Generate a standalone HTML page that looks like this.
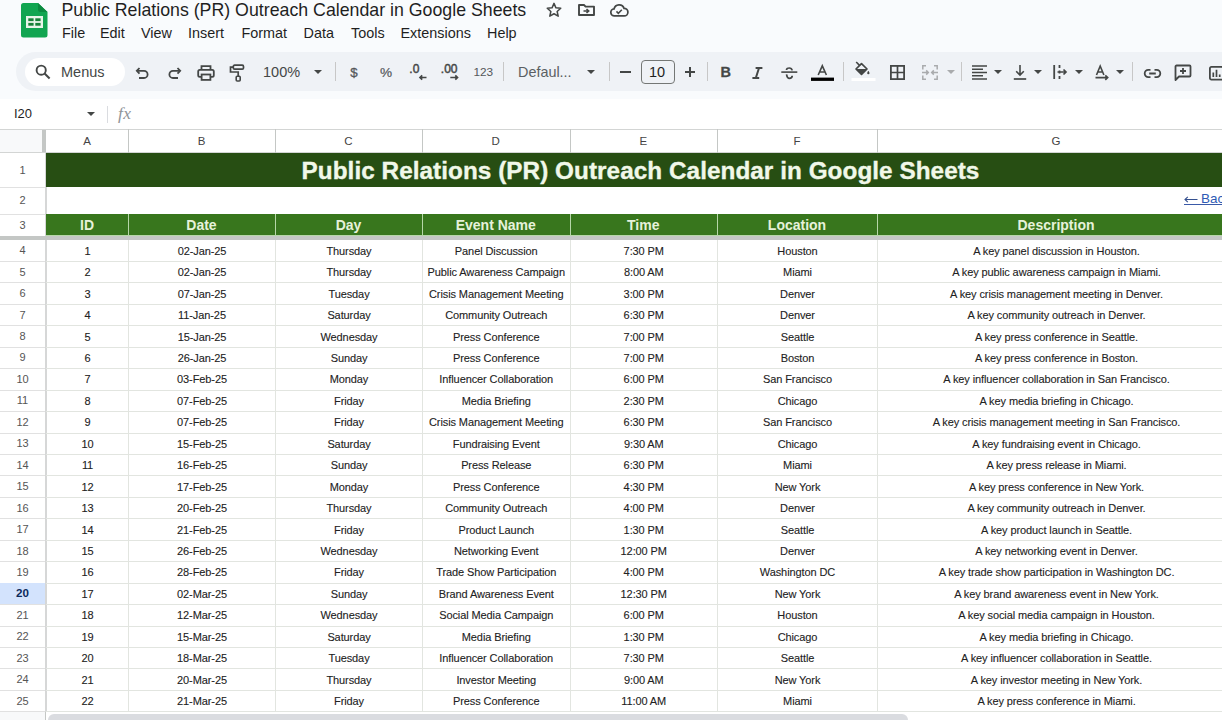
<!DOCTYPE html><html><head><meta charset="utf-8"><title>Sheet</title><style>
*{margin:0;padding:0;box-sizing:border-box}
html,body{width:1222px;height:720px;overflow:hidden;background:#f9fbfd;font-family:"Liberation Sans",sans-serif;position:relative}
.a{position:absolute}
.t{position:absolute;white-space:nowrap}
.ttl{left:61.5px;top:-1px;font-size:17.75px;color:#1f1f1f;line-height:22px}
.mn{top:24px;font-size:14.4px;color:#1f1f1f;line-height:18px}
.ic{position:absolute;overflow:visible}
.pill{left:16px;top:52px;width:1240px;height:39px;background:#eff2f6;border-radius:20px}
.srch{left:25px;top:58px;width:100px;height:28px;background:#fff;border-radius:14px}
.tb{font-size:14px;color:#444746;line-height:18px}
.sep{width:1px;background:#c7c7c7;top:62px;height:19px}
.fbar{left:0;top:99px;width:1222px;height:30px;background:#fff}
.grid{left:0;top:129px;width:1222px;height:591px;background:#fff;overflow:hidden}
.ch{font-size:11.5px;color:#444;text-align:center;line-height:14px}
.rn{font-size:11px;color:#555;text-align:center;line-height:14px;width:45px;left:0}
.dt{font-size:11px;color:#222;text-align:center;line-height:14px;letter-spacing:-0.1px;-webkit-text-stroke:0.1px #222}
.hd{font-size:14px;color:#e6f2da;font-weight:bold;text-align:center;line-height:16px}
</style></head><body>
<svg class="ic" style="left:21px;top:3px" width="27" height="35" viewBox="0 0 27 35">
<path d="M2.5 0 H17 L26.5 9 V32 a2.5 2.5 0 0 1 -2.5 2.5 H2.5 a2.5 2.5 0 0 1 -2.5 -2.5 V2.5 a2.5 2.5 0 0 1 2.5 -2.5 Z" fill="#12a551"/>
<path d="M17 0 L26.5 9 H19.5 a2.5 2.5 0 0 1 -2.5 -2.5 Z" fill="#0c8a40"/>
<rect x="5" y="13" width="17" height="12" fill="#e8f5e9"/>
<rect x="7.3" y="15.3" width="5.3" height="2.8" fill="#188038"/>
<rect x="14.3" y="15.3" width="5.3" height="2.8" fill="#188038"/>
<rect x="7.3" y="19.9" width="5.3" height="2.8" fill="#188038"/>
<rect x="14.3" y="19.9" width="5.3" height="2.8" fill="#188038"/>
</svg>
<div class="t ttl">Public Relations (PR) Outreach Calendar in Google Sheets</div>
<div class="t mn" style="left:62px">File</div>
<div class="t mn" style="left:100px">Edit</div>
<div class="t mn" style="left:141px">View</div>
<div class="t mn" style="left:188px">Insert</div>
<div class="t mn" style="left:241.5px">Format</div>
<div class="t mn" style="left:303.5px">Data</div>
<div class="t mn" style="left:351px">Tools</div>
<div class="t mn" style="left:400.5px">Extensions</div>
<div class="t mn" style="left:487px">Help</div>
<svg class="ic" style="left:545px;top:1px" width="18" height="18" viewBox="0 0 24 24"><path d="M12 3.2 l2.6 5.9 6.4 .6 -4.8 4.3 1.4 6.3 -5.6 -3.3 -5.6 3.3 1.4 -6.3 -4.8 -4.3 6.4 -.6 Z" fill="none" stroke="#444746" stroke-width="2" stroke-linejoin="round"/></svg>
<svg class="ic" style="left:578px;top:4px" width="17" height="12" viewBox="0 0 17 12"><path d="M1 1 H6 L7.6 2.6 H16 V11 H1 Z" fill="none" stroke="#444746" stroke-width="1.9" stroke-linejoin="round"/><path d="M5.5 7 H10.5 M8.5 5 L10.7 7 L8.5 9" fill="none" stroke="#444746" stroke-width="1.6"/></svg>
<svg class="ic" style="left:609.5px;top:3.5px" width="18.5" height="13" viewBox="0 0 20 14"><path d="M5 12.9 a3.8 3.8 0 0 1 -.6 -7.6 a5.6 5.6 0 0 1 10.8 -.6 a3.9 3.9 0 0 1 .1 8.2 z" fill="none" stroke="#444746" stroke-width="1.9"/><path d="M7 8 l2 2 3.8 -3.8" fill="none" stroke="#444746" stroke-width="1.7"/></svg>
<div class="a pill"></div><div class="a srch"></div>
<svg class="ic" style="left:35px;top:64px" width="16" height="16" viewBox="0 0 16 16"><circle cx="6.2" cy="6.2" r="4.6" fill="none" stroke="#444746" stroke-width="1.9"/><path d="M9.6 9.6 L14.6 14.6" stroke="#444746" stroke-width="2.1"/></svg>
<div class="t tb" style="left:61px;top:63px;font-size:14.5px">Menus</div>
<svg class="ic" style="left:135px;top:66px" width="15" height="14" viewBox="0 0 15 14"><path d="M4.5 2 L1.8 4.8 L4.5 7.6" fill="none" stroke="#444746" stroke-width="1.8"/><path d="M2 4.8 H9 a3.6 3.6 0 0 1 0 7.2 H4" fill="none" stroke="#444746" stroke-width="1.8"/></svg>
<svg class="ic" style="left:167px;top:66px" width="15" height="14" viewBox="0 0 15 14"><path d="M10.5 2 L13.2 4.8 L10.5 7.6" fill="none" stroke="#444746" stroke-width="1.8"/><path d="M13 4.8 H6 a3.6 3.6 0 0 0 0 7.2 H11" fill="none" stroke="#444746" stroke-width="1.8"/></svg>
<svg class="ic" style="left:197px;top:65px" width="18" height="16" viewBox="0 0 18 16"><path d="M4.5 4.5 V1.2 H13.5 V4.5" fill="none" stroke="#444746" stroke-width="1.8"/><rect x="1.2" y="4.8" width="15.6" height="7" rx="1.6" fill="none" stroke="#444746" stroke-width="1.8"/><rect x="4.6" y="9.5" width="8.8" height="5.4" fill="#eff2f6" stroke="#444746" stroke-width="1.8"/></svg>
<svg class="ic" style="left:229px;top:64px" width="16" height="18" viewBox="0 0 16 18"><rect x="4.3" y="1.2" width="10.2" height="4" rx="1.3" fill="none" stroke="#444746" stroke-width="1.7"/><path d="M4.3 3.2 H1.5 V8 H9.2 V12" fill="none" stroke="#444746" stroke-width="1.7"/><rect x="7.2" y="12.2" width="4" height="4.8" rx="1" fill="none" stroke="#444746" stroke-width="1.6"/></svg>
<div class="t tb" style="left:263px;top:63px;font-size:14.5px">100%</div>
<svg class="ic" style="left:313.5px;top:69.5px" width="8" height="4" viewBox="0 0 8 4"><path d="M0 0 H8 L4 4 Z" fill="#444746"/></svg>
<div class="a sep" style="left:335px"></div>
<div class="a sep" style="left:503px"></div>
<div class="a sep" style="left:609px"></div>
<div class="a sep" style="left:706.5px"></div>
<div class="a sep" style="left:843px"></div>
<div class="a sep" style="left:961px"></div>
<div class="a sep" style="left:1132px"></div>
<div class="t tb" style="left:350.3px;top:63.5px;font-size:13.3px;color:#55585b;-webkit-text-stroke:0.3px #55585b">$</div>
<div class="t tb" style="left:380px;top:63.5px;font-size:13.6px;color:#55585b;-webkit-text-stroke:0.2px #55585b">%</div>
<svg class="ic" style="left:409px;top:63px" width="19" height="18" viewBox="0 0 19 18"><text x="0.3" y="10.4" font-family="Liberation Sans" font-size="12" fill="#444746" stroke="#444746" stroke-width="0.45">.0</text><path d="M17.5 14.5 H11 M13.2 12.3 L11 14.5 L13.2 16.7" fill="none" stroke="#444746" stroke-width="1.7"/></svg>
<svg class="ic" style="left:441px;top:63px" width="20" height="18" viewBox="0 0 20 18"><text x="-0.2" y="10.4" font-family="Liberation Sans" font-size="12" fill="#444746" stroke="#444746" stroke-width="0.45">.00</text><path d="M9.3 14.5 H16.5 M14.3 12.3 L16.5 14.5 L14.3 16.7" fill="none" stroke="#444746" stroke-width="1.7"/></svg>
<div class="t tb" style="left:473.5px;top:62.5px;font-size:11.8px;color:#55585b">123</div>
<div class="t tb" style="left:518px;top:63px;font-size:14.4px;color:#5b5f63">Defaul...</div>
<svg class="ic" style="left:586.5px;top:69.5px" width="8" height="4" viewBox="0 0 8 4"><path d="M0 0 H8 L4 4 Z" fill="#444746"/></svg>
<div class="a" style="left:620px;top:71px;width:10.5px;height:1.5px;background:#444746"></div>
<div class="a" style="left:641px;top:60px;width:34px;height:24px;border:1px solid #747775;border-radius:4px"></div>
<div class="t tb" style="left:649px;top:63px;font-size:14.5px;color:#1f1f1f">10</div>
<div class="a" style="left:684.5px;top:71px;width:10.5px;height:1.5px;background:#444746"></div><div class="a" style="left:689px;top:66.5px;width:1.5px;height:10.5px;background:#444746"></div>
<div class="t tb" style="left:720.5px;top:63px;font-size:14.5px;font-weight:bold;-webkit-text-stroke:0.3px #444746">B</div>
<svg class="ic" style="left:752px;top:67px" width="11" height="12" viewBox="0 0 11 12"><path d="M3.6 1 H10.4 M0.4 11 H7.2 M7 1 L3.8 11" fill="none" stroke="#444746" stroke-width="2"/></svg>
<svg class="ic" style="left:781px;top:66.5px" width="17" height="12.5" viewBox="0 0 17 12.5"><path d="M0.3 5.1 H16.3" stroke="#444746" stroke-width="1.6"/><path d="M11.2 3.4 C10.8 1.7 9.6 1 8.3 1 C6.8 1 5.5 1.8 5.5 3.1" fill="none" stroke="#444746" stroke-width="1.7"/><path d="M5.5 7.4 C5.9 9.7 7.1 11.4 8.4 11.4 C10 11.4 11.2 10.3 11.2 8.8" fill="none" stroke="#444746" stroke-width="1.7"/></svg>
<svg class="ic" style="left:811px;top:64px" width="23" height="18" viewBox="0 0 23 18"><path d="M7.2 11 L11.3 1.8 L15.4 11 M8.6 8 H14" fill="none" stroke="#444746" stroke-width="1.6"/><rect x="0" y="13.6" width="23" height="3.3" fill="#000"/></svg>
<svg class="ic" style="left:851px;top:60px" width="25" height="22" viewBox="0 0 25 22"><path d="M5.2 2 L8.8 5.6" stroke="#444746" stroke-width="1.6"/><path d="M5 9 L10.5 3.6 L16 9 L10.5 14.4 Z" fill="none" stroke="#444746" stroke-width="1.7" stroke-linejoin="round"/><path d="M5 9 H16 L10.5 14.4 Z" fill="#444746"/><path d="M17.3 10.8 C16.6 11.8 16.2 12.6 16.2 13.2 a1.15 1.15 0 0 0 2.3 0 C18.5 12.6 18.1 11.8 17.3 10.8 Z" fill="#444746"/><rect x="0.5" y="18" width="24" height="3" fill="#fff"/></svg>
<svg class="ic" style="left:889.5px;top:65px" width="15" height="15" viewBox="0 0 15 15"><rect x="0.9" y="0.9" width="13.2" height="13.2" fill="none" stroke="#444746" stroke-width="1.8"/><path d="M7.5 1 V14 M1 7.5 H14" stroke="#444746" stroke-width="1.7"/></svg>
<svg class="ic" style="left:922px;top:65px" width="16" height="15" viewBox="0 0 16 15"><path d="M4 0.8 H0.8 V4.5 M0.8 10.5 V14.2 H4 M12 0.8 H15.2 V4.5 M15.2 10.5 V14.2 H12" fill="none" stroke="#a9abad" stroke-width="1.5"/><path d="M0 7.5 H6.3 M4.2 5.4 L6.3 7.5 L4.2 9.6 M16 7.5 H9.7 M11.8 5.4 L9.7 7.5 L11.8 9.6" fill="none" stroke="#a9abad" stroke-width="1.5"/></svg>
<svg class="ic" style="left:946.5px;top:69.5px" width="8" height="4" viewBox="0 0 8 4"><path d="M0 0 H8 L4 4 Z" fill="#a9abad"/></svg>
<svg class="ic" style="left:971.5px;top:64.5px" width="15" height="15" viewBox="0 0 15 15"><path d="M0 1 H15 M0 4.25 H11 M0 7.5 H15 M0 10.75 H11 M0 14 H15" stroke="#444746" stroke-width="1.45"/></svg>
<svg class="ic" style="left:993.5px;top:69.5px" width="8" height="4" viewBox="0 0 8 4"><path d="M0 0 H8 L4 4 Z" fill="#444746"/></svg>
<svg class="ic" style="left:1012.5px;top:64px" width="14" height="16" viewBox="0 0 14 16"><path d="M7 1 V11 M3.2 7.2 L7 11 L10.8 7.2" fill="none" stroke="#444746" stroke-width="1.6"/><path d="M0.8 15 H13.2" stroke="#444746" stroke-width="1.7"/></svg>
<svg class="ic" style="left:1034px;top:69.5px" width="8" height="4" viewBox="0 0 8 4"><path d="M0 0 H8 L4 4 Z" fill="#444746"/></svg>
<svg class="ic" style="left:1053px;top:64px" width="15" height="16" viewBox="0 0 15 16"><path d="M1.2 1 V15" stroke="#444746" stroke-width="1.8"/><path d="M6.5 1 V4 M6.5 6.5 V9.5 M6.5 12 V15" stroke="#444746" stroke-width="1.8"/><path d="M4.5 8 H13 M10.5 5.5 L13 8 L10.5 10.5" fill="none" stroke="#444746" stroke-width="1.7"/></svg>
<svg class="ic" style="left:1075px;top:69.5px" width="8" height="4" viewBox="0 0 8 4"><path d="M0 0 H8 L4 4 Z" fill="#444746"/></svg>
<svg class="ic" style="left:1095px;top:64.5px" width="15" height="16" viewBox="0 0 15 16"><path d="M1.5 10 L5.2 1 L8.9 10 M2.8 7 H7.6" fill="none" stroke="#444746" stroke-width="1.6"/><path d="M0.5 12.6 H12.5 M10.3 10.4 L12.7 12.6 L10.3 14.8" fill="none" stroke="#444746" stroke-width="1.6"/></svg>
<svg class="ic" style="left:1115.5px;top:69.5px" width="8" height="4" viewBox="0 0 8 4"><path d="M0 0 H8 L4 4 Z" fill="#444746"/></svg>
<svg class="ic" style="left:1143.5px;top:68.5px" width="17" height="9" viewBox="0 0 17 9"><path d="M6.5 0.9 H4.3 a3.6 3.6 0 0 0 0 7.2 H6.5 M10.5 0.9 H12.7 a3.6 3.6 0 0 1 0 7.2 H10.5 M5.2 4.5 H11.8" fill="none" stroke="#444746" stroke-width="1.8"/></svg>
<svg class="ic" style="left:1174px;top:64px" width="18" height="17" viewBox="0 0 18 17"><path d="M1.5 16 V2.5 a1 1 0 0 1 1 -1 H15.5 a1 1 0 0 1 1 1 V11.5 a1 1 0 0 1 -1 1 H5 Z" fill="none" stroke="#444746" stroke-width="1.8" stroke-linejoin="round"/><path d="M9 4 V10 M6 7 H12" stroke="#444746" stroke-width="1.8"/></svg>
<svg class="ic" style="left:1208.5px;top:65.5px" width="15" height="14.5" viewBox="0 0 15 14.5"><rect x="0.9" y="0.9" width="13.2" height="12.7" rx="1.5" fill="none" stroke="#444746" stroke-width="1.8"/><path d="M4.3 11 V6.5 M7.5 11 V3.8 M10.7 11 V8.5" stroke="#444746" stroke-width="1.7"/></svg>
<div class="a fbar"></div>
<div class="t" style="left:14px;top:106px;font-size:13px;color:#1f1f1f;line-height:16px">I20</div>
<svg class="ic" style="left:87px;top:112.3px" width="8" height="4" viewBox="0 0 8 4"><path d="M0 0 H8 L4 4 Z" fill="#444746"/></svg>
<div class="a" style="left:106.5px;top:106px;width:1px;height:17px;background:#dadce0"></div>
<div class="t" style="left:118px;top:103px;font-size:17.5px;color:#909498;font-family:'Liberation Serif',serif;font-style:italic;line-height:20px;letter-spacing:0.5px">fx</div>
<div class="a grid">
<div class="a" style="left:0;top:0;width:42px;height:24px;background:#f8f9fa"></div>
<div class="a" style="left:42px;top:0;width:4px;height:24px;background:#c4c7c5"></div>
<div class="a" style="left:0;top:0;width:1222px;height:1px;background:#d3d5d4"></div>
<div class="a" style="left:0;top:23px;width:1222px;height:1px;background:#d3d5d4"></div>
<div class="t ch" style="left:46px;width:82px;top:4.5px">A</div>
<div class="t ch" style="left:128px;width:147px;top:4.5px">B</div>
<div class="a" style="left:128px;top:0;width:1px;height:24px;background:#c4c7c5"></div>
<div class="t ch" style="left:275px;width:147px;top:4.5px">C</div>
<div class="a" style="left:275px;top:0;width:1px;height:24px;background:#c4c7c5"></div>
<div class="t ch" style="left:422px;width:147.5px;top:4.5px">D</div>
<div class="a" style="left:422px;top:0;width:1px;height:24px;background:#c4c7c5"></div>
<div class="t ch" style="left:569.5px;width:147.5px;top:4.5px">E</div>
<div class="a" style="left:569.5px;top:0;width:1px;height:24px;background:#c4c7c5"></div>
<div class="t ch" style="left:717px;width:160px;top:4.5px">F</div>
<div class="a" style="left:717px;top:0;width:1px;height:24px;background:#c4c7c5"></div>
<div class="t ch" style="left:877px;width:358px;top:4.5px">G</div>
<div class="a" style="left:877px;top:0;width:1px;height:24px;background:#c4c7c5"></div>
<div class="a" style="left:45px;top:24px;width:2px;height:600px;background:#d6d7d7"></div>
<div class="a" style="left:0;top:58px;width:45px;height:1px;background:#e1e1e1"></div>
<div class="a" style="left:0;top:84.5px;width:45px;height:1px;background:#e1e1e1"></div>
<div class="t rn" style="top:34px">1</div>
<div class="t rn" style="top:64.25px">2</div>
<div class="t rn" style="top:88.5px">3</div>
<div class="a" style="left:46px;top:24px;width:1176px;height:34px;background:#274e13"></div>
<div class="t" style="left:46px;width:1189px;top:28px;text-align:center;font-size:24.3px;font-weight:bold;color:#f1f8e9;line-height:28px;-webkit-text-stroke:0.35px #f1f8e9;letter-spacing:0.05px">Public Relations (PR) Outreach Calendar in Google Sheets</div>
<svg class="ic" style="left:1184px;top:67px" width="14" height="7" viewBox="0 0 14 7"><path d="M13.5 3.5 H1 M3.8 0.8 L1 3.5 L3.8 6.2" fill="none" stroke="#35508f" stroke-width="1.1"/></svg>
<div class="a" style="left:1184px;top:75px;width:40px;height:1px;background:#3a5aa8"></div>
<div class="t" style="left:1201px;top:61.5px;font-size:13.5px;color:#2d5ab5;line-height:16px">Back to Dashboard</div>
<div class="a" style="left:46px;top:84.5px;width:1176px;height:21.5px;background:#38761d"></div>
<div class="a" style="left:46px;top:106px;width:1176px;height:1px;background:#b6d7a8"></div>
<div class="t hd" style="left:46px;width:82px;top:88px">ID</div>
<div class="t hd" style="left:128px;width:147px;top:88px">Date</div>
<div class="a" style="left:128px;top:84.5px;width:1px;height:21.5px;background:#b6d7a8"></div>
<div class="t hd" style="left:275px;width:147px;top:88px">Day</div>
<div class="a" style="left:275px;top:84.5px;width:1px;height:21.5px;background:#b6d7a8"></div>
<div class="t hd" style="left:422px;width:147.5px;top:88px">Event Name</div>
<div class="a" style="left:422px;top:84.5px;width:1px;height:21.5px;background:#b6d7a8"></div>
<div class="t hd" style="left:569.5px;width:147.5px;top:88px">Time</div>
<div class="a" style="left:569.5px;top:84.5px;width:1px;height:21.5px;background:#b6d7a8"></div>
<div class="t hd" style="left:717px;width:160px;top:88px">Location</div>
<div class="a" style="left:717px;top:84.5px;width:1px;height:21.5px;background:#b6d7a8"></div>
<div class="t hd" style="left:877px;width:358px;top:88px">Description</div>
<div class="a" style="left:877px;top:84.5px;width:1px;height:21.5px;background:#b6d7a8"></div>
<div class="a" style="left:0;top:106.5px;width:1222px;height:4px;background:#c4c7c5"></div>
<div class="t rn" style="top:114.2px">4</div>
<div class="a" style="left:0;top:132px;width:45px;height:1px;background:#e1e1e1"></div>
<div class="a" style="left:46px;top:132px;width:1176px;height:1px;background:#e2e5e0"></div>
<div class="t dt" style="left:46.5px;width:82px;top:114.7px">1</div>
<div class="t dt" style="left:128.5px;width:147px;top:114.7px">02-Jan-25</div>
<div class="t dt" style="left:275.5px;width:147px;top:114.7px">Thursday</div>
<div class="t dt" style="left:422.5px;width:147.5px;top:114.7px">Panel Discussion</div>
<div class="t dt" style="left:570px;width:147.5px;top:114.7px">7:30 PM</div>
<div class="t dt" style="left:717.5px;width:160px;top:114.7px">Houston</div>
<div class="t dt" style="left:877.5px;width:358px;top:114.7px">A key panel discussion in Houston.</div>
<div class="t rn" style="top:135.65px">5</div>
<div class="a" style="left:0;top:153px;width:45px;height:1px;background:#e1e1e1"></div>
<div class="a" style="left:46px;top:153px;width:1176px;height:1px;background:#e2e5e0"></div>
<div class="t dt" style="left:46.5px;width:82px;top:136.15px">2</div>
<div class="t dt" style="left:128.5px;width:147px;top:136.15px">02-Jan-25</div>
<div class="t dt" style="left:275.5px;width:147px;top:136.15px">Thursday</div>
<div class="t dt" style="left:422.5px;width:147.5px;top:136.15px">Public Awareness Campaign</div>
<div class="t dt" style="left:570px;width:147.5px;top:136.15px">8:00 AM</div>
<div class="t dt" style="left:717.5px;width:160px;top:136.15px">Miami</div>
<div class="t dt" style="left:877.5px;width:358px;top:136.15px">A key public awareness campaign in Miami.</div>
<div class="t rn" style="top:157.1px">6</div>
<div class="a" style="left:0;top:175px;width:45px;height:1px;background:#e1e1e1"></div>
<div class="a" style="left:46px;top:175px;width:1176px;height:1px;background:#e2e5e0"></div>
<div class="t dt" style="left:46.5px;width:82px;top:157.6px">3</div>
<div class="t dt" style="left:128.5px;width:147px;top:157.6px">07-Jan-25</div>
<div class="t dt" style="left:275.5px;width:147px;top:157.6px">Tuesday</div>
<div class="t dt" style="left:422.5px;width:147.5px;top:157.6px">Crisis Management Meeting</div>
<div class="t dt" style="left:570px;width:147.5px;top:157.6px">3:00 PM</div>
<div class="t dt" style="left:717.5px;width:160px;top:157.6px">Denver</div>
<div class="t dt" style="left:877.5px;width:358px;top:157.6px">A key crisis management meeting in Denver.</div>
<div class="t rn" style="top:178.55px">7</div>
<div class="a" style="left:0;top:196px;width:45px;height:1px;background:#e1e1e1"></div>
<div class="a" style="left:46px;top:196px;width:1176px;height:1px;background:#e2e5e0"></div>
<div class="t dt" style="left:46.5px;width:82px;top:179.05px">4</div>
<div class="t dt" style="left:128.5px;width:147px;top:179.05px">11-Jan-25</div>
<div class="t dt" style="left:275.5px;width:147px;top:179.05px">Saturday</div>
<div class="t dt" style="left:422.5px;width:147.5px;top:179.05px">Community Outreach</div>
<div class="t dt" style="left:570px;width:147.5px;top:179.05px">6:30 PM</div>
<div class="t dt" style="left:717.5px;width:160px;top:179.05px">Denver</div>
<div class="t dt" style="left:877.5px;width:358px;top:179.05px">A key community outreach in Denver.</div>
<div class="t rn" style="top:200px">8</div>
<div class="a" style="left:0;top:218px;width:45px;height:1px;background:#e1e1e1"></div>
<div class="a" style="left:46px;top:218px;width:1176px;height:1px;background:#e2e5e0"></div>
<div class="t dt" style="left:46.5px;width:82px;top:200.5px">5</div>
<div class="t dt" style="left:128.5px;width:147px;top:200.5px">15-Jan-25</div>
<div class="t dt" style="left:275.5px;width:147px;top:200.5px">Wednesday</div>
<div class="t dt" style="left:422.5px;width:147.5px;top:200.5px">Press Conference</div>
<div class="t dt" style="left:570px;width:147.5px;top:200.5px">7:00 PM</div>
<div class="t dt" style="left:717.5px;width:160px;top:200.5px">Seattle</div>
<div class="t dt" style="left:877.5px;width:358px;top:200.5px">A key press conference in Seattle.</div>
<div class="t rn" style="top:221.45px">9</div>
<div class="a" style="left:0;top:239px;width:45px;height:1px;background:#e1e1e1"></div>
<div class="a" style="left:46px;top:239px;width:1176px;height:1px;background:#e2e5e0"></div>
<div class="t dt" style="left:46.5px;width:82px;top:221.95px">6</div>
<div class="t dt" style="left:128.5px;width:147px;top:221.95px">26-Jan-25</div>
<div class="t dt" style="left:275.5px;width:147px;top:221.95px">Sunday</div>
<div class="t dt" style="left:422.5px;width:147.5px;top:221.95px">Press Conference</div>
<div class="t dt" style="left:570px;width:147.5px;top:221.95px">7:00 PM</div>
<div class="t dt" style="left:717.5px;width:160px;top:221.95px">Boston</div>
<div class="t dt" style="left:877.5px;width:358px;top:221.95px">A key press conference in Boston.</div>
<div class="t rn" style="top:242.9px">10</div>
<div class="a" style="left:0;top:261px;width:45px;height:1px;background:#e1e1e1"></div>
<div class="a" style="left:46px;top:261px;width:1176px;height:1px;background:#e2e5e0"></div>
<div class="t dt" style="left:46.5px;width:82px;top:243.4px">7</div>
<div class="t dt" style="left:128.5px;width:147px;top:243.4px">03-Feb-25</div>
<div class="t dt" style="left:275.5px;width:147px;top:243.4px">Monday</div>
<div class="t dt" style="left:422.5px;width:147.5px;top:243.4px">Influencer Collaboration</div>
<div class="t dt" style="left:570px;width:147.5px;top:243.4px">6:00 PM</div>
<div class="t dt" style="left:717.5px;width:160px;top:243.4px">San Francisco</div>
<div class="t dt" style="left:877.5px;width:358px;top:243.4px">A key influencer collaboration in San Francisco.</div>
<div class="t rn" style="top:264.35px">11</div>
<div class="a" style="left:0;top:282px;width:45px;height:1px;background:#e1e1e1"></div>
<div class="a" style="left:46px;top:282px;width:1176px;height:1px;background:#e2e5e0"></div>
<div class="t dt" style="left:46.5px;width:82px;top:264.85px">8</div>
<div class="t dt" style="left:128.5px;width:147px;top:264.85px">07-Feb-25</div>
<div class="t dt" style="left:275.5px;width:147px;top:264.85px">Friday</div>
<div class="t dt" style="left:422.5px;width:147.5px;top:264.85px">Media Briefing</div>
<div class="t dt" style="left:570px;width:147.5px;top:264.85px">2:30 PM</div>
<div class="t dt" style="left:717.5px;width:160px;top:264.85px">Chicago</div>
<div class="t dt" style="left:877.5px;width:358px;top:264.85px">A key media briefing in Chicago.</div>
<div class="t rn" style="top:285.8px">12</div>
<div class="a" style="left:0;top:304px;width:45px;height:1px;background:#e1e1e1"></div>
<div class="a" style="left:46px;top:304px;width:1176px;height:1px;background:#e2e5e0"></div>
<div class="t dt" style="left:46.5px;width:82px;top:286.3px">9</div>
<div class="t dt" style="left:128.5px;width:147px;top:286.3px">07-Feb-25</div>
<div class="t dt" style="left:275.5px;width:147px;top:286.3px">Friday</div>
<div class="t dt" style="left:422.5px;width:147.5px;top:286.3px">Crisis Management Meeting</div>
<div class="t dt" style="left:570px;width:147.5px;top:286.3px">6:30 PM</div>
<div class="t dt" style="left:717.5px;width:160px;top:286.3px">San Francisco</div>
<div class="t dt" style="left:877.5px;width:358px;top:286.3px">A key crisis management meeting in San Francisco.</div>
<div class="t rn" style="top:307.25px">13</div>
<div class="a" style="left:0;top:325px;width:45px;height:1px;background:#e1e1e1"></div>
<div class="a" style="left:46px;top:325px;width:1176px;height:1px;background:#e2e5e0"></div>
<div class="t dt" style="left:46.5px;width:82px;top:307.75px">10</div>
<div class="t dt" style="left:128.5px;width:147px;top:307.75px">15-Feb-25</div>
<div class="t dt" style="left:275.5px;width:147px;top:307.75px">Saturday</div>
<div class="t dt" style="left:422.5px;width:147.5px;top:307.75px">Fundraising Event</div>
<div class="t dt" style="left:570px;width:147.5px;top:307.75px">9:30 AM</div>
<div class="t dt" style="left:717.5px;width:160px;top:307.75px">Chicago</div>
<div class="t dt" style="left:877.5px;width:358px;top:307.75px">A key fundraising event in Chicago.</div>
<div class="t rn" style="top:328.7px">14</div>
<div class="a" style="left:0;top:346px;width:45px;height:1px;background:#e1e1e1"></div>
<div class="a" style="left:46px;top:346px;width:1176px;height:1px;background:#e2e5e0"></div>
<div class="t dt" style="left:46.5px;width:82px;top:329.2px">11</div>
<div class="t dt" style="left:128.5px;width:147px;top:329.2px">16-Feb-25</div>
<div class="t dt" style="left:275.5px;width:147px;top:329.2px">Sunday</div>
<div class="t dt" style="left:422.5px;width:147.5px;top:329.2px">Press Release</div>
<div class="t dt" style="left:570px;width:147.5px;top:329.2px">6:30 PM</div>
<div class="t dt" style="left:717.5px;width:160px;top:329.2px">Miami</div>
<div class="t dt" style="left:877.5px;width:358px;top:329.2px">A key press release in Miami.</div>
<div class="t rn" style="top:350.15px">15</div>
<div class="a" style="left:0;top:368px;width:45px;height:1px;background:#e1e1e1"></div>
<div class="a" style="left:46px;top:368px;width:1176px;height:1px;background:#e2e5e0"></div>
<div class="t dt" style="left:46.5px;width:82px;top:350.65px">12</div>
<div class="t dt" style="left:128.5px;width:147px;top:350.65px">17-Feb-25</div>
<div class="t dt" style="left:275.5px;width:147px;top:350.65px">Monday</div>
<div class="t dt" style="left:422.5px;width:147.5px;top:350.65px">Press Conference</div>
<div class="t dt" style="left:570px;width:147.5px;top:350.65px">4:30 PM</div>
<div class="t dt" style="left:717.5px;width:160px;top:350.65px">New York</div>
<div class="t dt" style="left:877.5px;width:358px;top:350.65px">A key press conference in New York.</div>
<div class="t rn" style="top:371.6px">16</div>
<div class="a" style="left:0;top:389px;width:45px;height:1px;background:#e1e1e1"></div>
<div class="a" style="left:46px;top:389px;width:1176px;height:1px;background:#e2e5e0"></div>
<div class="t dt" style="left:46.5px;width:82px;top:372.1px">13</div>
<div class="t dt" style="left:128.5px;width:147px;top:372.1px">20-Feb-25</div>
<div class="t dt" style="left:275.5px;width:147px;top:372.1px">Thursday</div>
<div class="t dt" style="left:422.5px;width:147.5px;top:372.1px">Community Outreach</div>
<div class="t dt" style="left:570px;width:147.5px;top:372.1px">4:00 PM</div>
<div class="t dt" style="left:717.5px;width:160px;top:372.1px">Denver</div>
<div class="t dt" style="left:877.5px;width:358px;top:372.1px">A key community outreach in Denver.</div>
<div class="t rn" style="top:393.05px">17</div>
<div class="a" style="left:0;top:411px;width:45px;height:1px;background:#e1e1e1"></div>
<div class="a" style="left:46px;top:411px;width:1176px;height:1px;background:#e2e5e0"></div>
<div class="t dt" style="left:46.5px;width:82px;top:393.55px">14</div>
<div class="t dt" style="left:128.5px;width:147px;top:393.55px">21-Feb-25</div>
<div class="t dt" style="left:275.5px;width:147px;top:393.55px">Friday</div>
<div class="t dt" style="left:422.5px;width:147.5px;top:393.55px">Product Launch</div>
<div class="t dt" style="left:570px;width:147.5px;top:393.55px">1:30 PM</div>
<div class="t dt" style="left:717.5px;width:160px;top:393.55px">Seattle</div>
<div class="t dt" style="left:877.5px;width:358px;top:393.55px">A key product launch in Seattle.</div>
<div class="t rn" style="top:414.5px">18</div>
<div class="a" style="left:0;top:432px;width:45px;height:1px;background:#e1e1e1"></div>
<div class="a" style="left:46px;top:432px;width:1176px;height:1px;background:#e2e5e0"></div>
<div class="t dt" style="left:46.5px;width:82px;top:415px">15</div>
<div class="t dt" style="left:128.5px;width:147px;top:415px">26-Feb-25</div>
<div class="t dt" style="left:275.5px;width:147px;top:415px">Wednesday</div>
<div class="t dt" style="left:422.5px;width:147.5px;top:415px">Networking Event</div>
<div class="t dt" style="left:570px;width:147.5px;top:415px">12:00 PM</div>
<div class="t dt" style="left:717.5px;width:160px;top:415px">Denver</div>
<div class="t dt" style="left:877.5px;width:358px;top:415px">A key networking event in Denver.</div>
<div class="t rn" style="top:435.95px">19</div>
<div class="a" style="left:0;top:454px;width:45px;height:1px;background:#e1e1e1"></div>
<div class="a" style="left:46px;top:454px;width:1176px;height:1px;background:#e2e5e0"></div>
<div class="t dt" style="left:46.5px;width:82px;top:436.45px">16</div>
<div class="t dt" style="left:128.5px;width:147px;top:436.45px">28-Feb-25</div>
<div class="t dt" style="left:275.5px;width:147px;top:436.45px">Friday</div>
<div class="t dt" style="left:422.5px;width:147.5px;top:436.45px">Trade Show Participation</div>
<div class="t dt" style="left:570px;width:147.5px;top:436.45px">4:00 PM</div>
<div class="t dt" style="left:717.5px;width:160px;top:436.45px">Washington DC</div>
<div class="t dt" style="left:877.5px;width:358px;top:436.45px">A key trade show participation in Washington DC.</div>
<div class="a" style="left:0;top:453.7px;width:45px;height:21.45px;background:#d3e3fd"></div>
<div class="t rn" style="top:457.4px;font-weight:bold;color:#0b2a5c;font-size:11.6px">20</div>
<div class="a" style="left:0;top:475px;width:45px;height:1px;background:#e1e1e1"></div>
<div class="a" style="left:46px;top:475px;width:1176px;height:1px;background:#e2e5e0"></div>
<div class="t dt" style="left:46.5px;width:82px;top:457.9px">17</div>
<div class="t dt" style="left:128.5px;width:147px;top:457.9px">02-Mar-25</div>
<div class="t dt" style="left:275.5px;width:147px;top:457.9px">Sunday</div>
<div class="t dt" style="left:422.5px;width:147.5px;top:457.9px">Brand Awareness Event</div>
<div class="t dt" style="left:570px;width:147.5px;top:457.9px">12:30 PM</div>
<div class="t dt" style="left:717.5px;width:160px;top:457.9px">New York</div>
<div class="t dt" style="left:877.5px;width:358px;top:457.9px">A key brand awareness event in New York.</div>
<div class="t rn" style="top:478.85px">21</div>
<div class="a" style="left:0;top:497px;width:45px;height:1px;background:#e1e1e1"></div>
<div class="a" style="left:46px;top:497px;width:1176px;height:1px;background:#e2e5e0"></div>
<div class="t dt" style="left:46.5px;width:82px;top:479.35px">18</div>
<div class="t dt" style="left:128.5px;width:147px;top:479.35px">12-Mar-25</div>
<div class="t dt" style="left:275.5px;width:147px;top:479.35px">Wednesday</div>
<div class="t dt" style="left:422.5px;width:147.5px;top:479.35px">Social Media Campaign</div>
<div class="t dt" style="left:570px;width:147.5px;top:479.35px">6:00 PM</div>
<div class="t dt" style="left:717.5px;width:160px;top:479.35px">Houston</div>
<div class="t dt" style="left:877.5px;width:358px;top:479.35px">A key social media campaign in Houston.</div>
<div class="t rn" style="top:500.3px">22</div>
<div class="a" style="left:0;top:518px;width:45px;height:1px;background:#e1e1e1"></div>
<div class="a" style="left:46px;top:518px;width:1176px;height:1px;background:#e2e5e0"></div>
<div class="t dt" style="left:46.5px;width:82px;top:500.8px">19</div>
<div class="t dt" style="left:128.5px;width:147px;top:500.8px">15-Mar-25</div>
<div class="t dt" style="left:275.5px;width:147px;top:500.8px">Saturday</div>
<div class="t dt" style="left:422.5px;width:147.5px;top:500.8px">Media Briefing</div>
<div class="t dt" style="left:570px;width:147.5px;top:500.8px">1:30 PM</div>
<div class="t dt" style="left:717.5px;width:160px;top:500.8px">Chicago</div>
<div class="t dt" style="left:877.5px;width:358px;top:500.8px">A key media briefing in Chicago.</div>
<div class="t rn" style="top:521.75px">23</div>
<div class="a" style="left:0;top:539px;width:45px;height:1px;background:#e1e1e1"></div>
<div class="a" style="left:46px;top:539px;width:1176px;height:1px;background:#e2e5e0"></div>
<div class="t dt" style="left:46.5px;width:82px;top:522.25px">20</div>
<div class="t dt" style="left:128.5px;width:147px;top:522.25px">18-Mar-25</div>
<div class="t dt" style="left:275.5px;width:147px;top:522.25px">Tuesday</div>
<div class="t dt" style="left:422.5px;width:147.5px;top:522.25px">Influencer Collaboration</div>
<div class="t dt" style="left:570px;width:147.5px;top:522.25px">7:30 PM</div>
<div class="t dt" style="left:717.5px;width:160px;top:522.25px">Seattle</div>
<div class="t dt" style="left:877.5px;width:358px;top:522.25px">A key influencer collaboration in Seattle.</div>
<div class="t rn" style="top:543.2px">24</div>
<div class="a" style="left:0;top:561px;width:45px;height:1px;background:#e1e1e1"></div>
<div class="a" style="left:46px;top:561px;width:1176px;height:1px;background:#e2e5e0"></div>
<div class="t dt" style="left:46.5px;width:82px;top:543.7px">21</div>
<div class="t dt" style="left:128.5px;width:147px;top:543.7px">20-Mar-25</div>
<div class="t dt" style="left:275.5px;width:147px;top:543.7px">Thursday</div>
<div class="t dt" style="left:422.5px;width:147.5px;top:543.7px">Investor Meeting</div>
<div class="t dt" style="left:570px;width:147.5px;top:543.7px">9:00 AM</div>
<div class="t dt" style="left:717.5px;width:160px;top:543.7px">New York</div>
<div class="t dt" style="left:877.5px;width:358px;top:543.7px">A key investor meeting in New York.</div>
<div class="t rn" style="top:564.65px">25</div>
<div class="a" style="left:0;top:582px;width:45px;height:1px;background:#e1e1e1"></div>
<div class="a" style="left:46px;top:582px;width:1176px;height:1px;background:#e2e5e0"></div>
<div class="t dt" style="left:46.5px;width:82px;top:565.15px">22</div>
<div class="t dt" style="left:128.5px;width:147px;top:565.15px">21-Mar-25</div>
<div class="t dt" style="left:275.5px;width:147px;top:565.15px">Friday</div>
<div class="t dt" style="left:422.5px;width:147.5px;top:565.15px">Press Conference</div>
<div class="t dt" style="left:570px;width:147.5px;top:565.15px">11:00 AM</div>
<div class="t dt" style="left:717.5px;width:160px;top:565.15px">Miami</div>
<div class="t dt" style="left:877.5px;width:358px;top:565.15px">A key press conference in Miami.</div>
<div class="a" style="left:128px;top:110.5px;width:1px;height:480px;background:#e2e5e0"></div>
<div class="a" style="left:275px;top:110.5px;width:1px;height:480px;background:#e2e5e0"></div>
<div class="a" style="left:422px;top:110.5px;width:1px;height:480px;background:#e2e5e0"></div>
<div class="a" style="left:569.5px;top:110.5px;width:1px;height:480px;background:#e2e5e0"></div>
<div class="a" style="left:717px;top:110.5px;width:1px;height:480px;background:#e2e5e0"></div>
<div class="a" style="left:877px;top:110.5px;width:1px;height:480px;background:#e2e5e0"></div>
<div class="a" style="left:0;top:582.5px;width:45px;height:10px;background:#f8f9fa"></div>
<div class="a" style="left:46px;top:582.5px;width:1176px;height:10px;background:#fff"></div>
<div class="a" style="left:45px;top:582.5px;width:1px;height:10px;background:#c4c7c5"></div>
<div class="a" style="left:48px;top:585px;width:860px;height:12px;background:#dadce0;border-radius:6px"></div>
</div>
</body></html>
